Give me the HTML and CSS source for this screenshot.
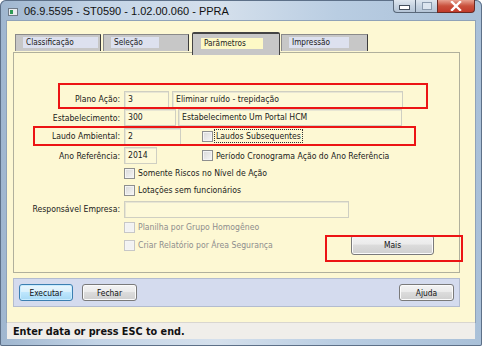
FILE: index.html
```html
<!DOCTYPE html>
<html lang="pt-br">
<head>
    <meta charset="UTF-8">
    <title>06.9.5595 - ST0590 - PPRA</title>
    <link rel="stylesheet" href="styles.css">
</head>
<body>
    <div class="window">
        <div class="titlebar">
            <span class="app-icon"><span class="app-icon-dot"></span></span>
            <span class="title">06.9.5595 - ST0590 - 1.02.00.060 - PPRA</span>
            <div class="controls">
                <span class="ctl ctl-min"><span class="bar"></span></span>
                <span class="ctl ctl-max"><span class="box"></span></span>
                <span class="ctl ctl-close">
                    <svg width="12" height="10" viewBox="0 0 12 10"><path d="M2 1 L10 9 M10 1 L2 9" stroke="#fff" stroke-width="2.4" stroke-linecap="square"/></svg>
                </span>
            </div>
        </div>

        <div class="client">
            <div class="tabs">
                <div class="tab tab-a"><span class="tab-label">Classificação</span></div>
                <div class="tab tab-b"><span class="tab-label">Seleção</span></div>
                <div class="tab tab-c active"><span class="tab-label">Parâmetros</span></div>
                <div class="tab tab-d"><span class="tab-label">Impressão</span></div>
            </div>

            <div class="panel">
                <div class="form">
                    <label class="lbl">Plano Ação:</label>
                    <div class="field">
                        <span class="input w-45">3</span>
                        <span class="input w-231 ml-3">Eliminar ruído - trepidação</span>
                    </div>

                    <label class="lbl">Estabelecimento:</label>
                    <div class="field">
                        <span class="input w-52">300</span>
                        <span class="input w-224 ml-2">Estabelecimento Um Portal HCM</span>
                    </div>

                    <label class="lbl">Laudo Ambiental:</label>
                    <div class="field">
                        <span class="input w-57">2</span>
                        <span class="check ml-21"></span>
                        <span class="check-text focused">Laudos Subsequentes</span>
                    </div>

                    <label class="lbl">Ano Referência:</label>
                    <div class="field">
                        <span class="input w-33">2014</span>
                        <span class="check ml-45"></span>
                        <span class="check-text">Período Cronograma Ação do Ano Referência</span>
                    </div>

                    <span></span>
                    <div class="field">
                        <span class="check"></span>
                        <span class="check-text">Somente Riscos no Nível de Ação</span>
                    </div>

                    <span></span>
                    <div class="field">
                        <span class="check"></span>
                        <span class="check-text">Lotações sem funcionários</span>
                    </div>

                    <label class="lbl">Responsável Empresa:</label>
                    <div class="field">
                        <span class="input w-225"></span>
                    </div>

                    <span></span>
                    <div class="field">
                        <span class="check disabled"></span>
                        <span class="check-text disabled">Planilha por Grupo Homogêneo</span>
                    </div>

                    <span></span>
                    <div class="field">
                        <span class="check disabled"></span>
                        <span class="check-text disabled">Criar Relatório por Área Segurança</span>
                        <button class="btn btn-mais">Mais</button>
                    </div>
                </div>
            </div>

            <div class="buttonbar">
                <button class="btn btn-default">Executar</button>
                <button class="btn btn-fechar">Fechar</button>
                <button class="btn btn-ajuda">Ajuda</button>
            </div>
        </div>

        <div class="status">Enter data or press ESC to end.</div>

        <!-- marcações em vermelho -->
        <div class="mark mark-plano"></div>
        <div class="mark mark-laudo"></div>
        <div class="mark mark-mais"></div>
    </div>
</body>
</html>
```

FILE: styles.css
```css
body {
    margin: 0;
    background-color: #fff;
    font-family: "DejaVu Sans Condensed", "Liberation Sans", Arial, sans-serif;
    font-size: 8.6px;
    color: #1a1a1a;
    width: 484px;
    height: 348px;
    overflow: hidden;
}

.window {
    position: relative;
    width: 482px;
    height: 346px;
    border-radius: 6px 6px 2px 2px;
    background: linear-gradient(90deg, #9fb6cf 0%, #c3d4e6 20%, #d5e0ec 45%, #b9cde2 70%, #a9c0d8 100%);
    box-shadow: inset 0 0 0 1px #5d7088;
    display: flex;
    flex-direction: column;
}

/* barra de titulo */
.titlebar {
    height: 21px;
    display: flex;
    align-items: flex-start;
    position: relative;
}

.app-icon {
    width: 10px;
    height: 8px;
    margin: 8px 0 0 8px;
    background-color: #e9ecef;
    border: 1px solid #6f7b88;
    box-sizing: border-box;
}

.app-icon-dot {
    display: block;
    width: 3px;
    height: 4px;
    margin: 1px 0 0 1px;
    background-color: #2e9b56;
}

.title {
    margin: 5px 0 0 6px;
    font-family: "Liberation Sans", Arial, sans-serif;
    font-size: 11px;
    color: #111;
}

.controls {
    display: flex;
    margin-left: auto;
    margin-right: 7px;
}

.ctl {
    height: 13px;
    display: flex;
    align-items: center;
    justify-content: center;
    border: 1px solid #59687a;
    border-top: none;
    box-sizing: border-box;
    background: linear-gradient(#dfe7f0, #c6d3e1 50%, #b5c5d7);
}

.ctl-min {
    width: 22px;
    border-radius: 0 0 0 4px;
    border-right: none;
}

.ctl-max {
    width: 22px;
    border-right: none;
}

.ctl-close {
    width: 38px;
    border-radius: 0 0 4px 0;
    background: linear-gradient(#e8a392, #c9503c 50%, #c23a2a);
    border-color: #6a2a24;
}

.bar {
    width: 9px;
    height: 3px;
    margin-top: 3px;
    background-color: #fff;
    border: 1px solid #45505e;
}

.box {
    width: 8px;
    height: 6px;
    border: 1px solid #8b9bae;
    background-color: #dce5ef;
}

/* area do cliente */
.client {
    margin: 0 7px;
    height: 301px;
    background-color: #fdf8d3;
    box-shadow: 0 0 0 1px #8fa2b8;
}

.tabs {
    display: flex;
    align-items: flex-end;
    height: 23px;
    padding: 11px 0 0 8px;
    margin-bottom: -3px;
    position: relative;
    z-index: 1;
}

.tab {
    height: 17px;
    margin-bottom: 4px;
    background-color: #c7c7c7;
    border: 1px solid #8a8a8a;
    border-right-color: #3d3d3d;
    border-bottom: none;
    box-sizing: border-box;
    padding: 2px 0 0 7px;
}

.tab-a { width: 86px; }
.tab-b { width: 86px; margin-left: 2px; }
.tab-c { width: 88px; margin-left: 3px; }
.tab-d { width: 87px; margin-left: 1px; }

.tab-label {
    display: block;
    height: 11px;
    line-height: 11px;
    padding-left: 3px;
    background-color: #dde1ef;
    font-size: 8.2px;
    box-sizing: border-box;
}

.tab-a .tab-label { width: 75px; }
.tab-b .tab-label { width: 48px; }
.tab-d .tab-label { width: 60px; }

.tab.active {
    height: 23px;
    margin-bottom: 0;
    border-color: #444;
    border-top-width: 2px;
    border-radius: 2px 2px 0 0;
    padding: 4px 0 0 8px;
}

.tab.active .tab-label {
    width: 62px;
    background-color: #fdf9c6;
}

.panel {
    margin: 0 15px 0 6px;
    height: 221px;
    border: 1px solid #b0b09c;
    box-sizing: border-box;
}

.form {
    display: grid;
    grid-template-columns: 106px 1fr;
    grid-template-rows: 20px 17px 20px 19px 16px 18px 20px 16px 20px;
    column-gap: 4px;
    align-items: center;
    padding: 36px 25px 0 0;
}

.lbl {
    text-align: right;
    white-space: nowrap;
}

.field {
    display: flex;
    align-items: center;
    white-space: nowrap;
}

.input {
    height: 17px;
    line-height: 15px;
    padding-left: 3px;
    border: 1px solid #cfcfc2;
    box-shadow: inset 1px 1px 0 #e8e6d4;
    background-color: #fdf9d9;
    box-sizing: border-box;
    overflow: hidden;
}

.w-33 { width: 33px; }
.w-45 { width: 45px; }
.w-52 { width: 52px; }
.w-57 { width: 57px; }
.w-224 { width: 224px; }
.w-225 { width: 225px; }
.w-231 { width: 231px; }
.ml-2 { margin-left: 2px; }
.ml-3 { margin-left: 3px; }
.ml-21 { margin-left: 21px; }
.ml-45 { margin-left: 45px; }

.check {
    width: 11px;
    height: 11px;
    border: 1px solid #8e8f8f;
    background: linear-gradient(135deg, #d9d9d9, #f6f6f6);
    box-shadow: inset 0 0 0 1px #f4f4f4;
    box-sizing: border-box;
    flex-shrink: 0;
}

.check.disabled {
    border-color: #c7c7c7;
    background: #f2f2f2;
}

.check-text {
    margin-left: 2px;
    padding: 0 1px;
    line-height: 12px;
}

.check-text.focused {
    outline: 1px dotted #333;
}

.check-text.disabled {
    color: #8d8d8d;
}

/* botoes */
.btn {
    font-family: "DejaVu Sans Condensed", "Liberation Sans", Arial, sans-serif;
    font-size: 8.4px;
    color: #111;
    height: 17px;
    padding: 0;
    border: 1px solid #7a7a7a;
    border-radius: 3px;
    background: linear-gradient(#f3f3f3, #ebebeb 45%, #dcdcdc 50%, #cfcfcf);
    box-shadow: inset 0 0 0 1px #fbfbfb;
}

.btn-mais {
    width: 83px;
    height: 20px;
    margin-left: auto;
}

.buttonbar {
    margin: 5px 15px 0 6px;
    height: 29px;
    background-color: #d4dbee;
    border: 1px solid #b3bccf;
    box-sizing: border-box;
    display: flex;
    align-items: center;
    padding: 0 5px;
}

.btn-default {
    width: 54px;
    border-color: #3c7fb1;
    background: linear-gradient(#eaf6fd, #d9f0fc 45%, #bee6fd 50%, #a7d9f5);
    box-shadow: inset 0 0 0 1px #c9ecff;
}

.btn-fechar {
    width: 55px;
    margin-left: 9px;
}

.btn-ajuda {
    width: 55px;
    margin-left: auto;
}

.status {
    margin: 0 7px;
    height: 17px;
    line-height: 17px;
    padding-left: 6px;
    background-color: #f0eeea;
    border-top: 1px solid #d9d6d0;
    box-sizing: border-box;
    font-family: "DejaVu Sans", Verdana, sans-serif;
    font-weight: bold;
    font-size: 9.7px;
    color: #111;
}

/* marcacoes vermelhas por cima da tela */
.mark {
    position: absolute;
    border: 2px solid #ec1414;
    box-sizing: border-box;
}

.mark-plano { left: 58px; top: 83px; width: 370px; height: 26px; }
.mark-laudo { left: 33px; top: 126px; width: 383px; height: 20px; }
.mark-mais { left: 325px; top: 235px; width: 138px; height: 27px; }
```
